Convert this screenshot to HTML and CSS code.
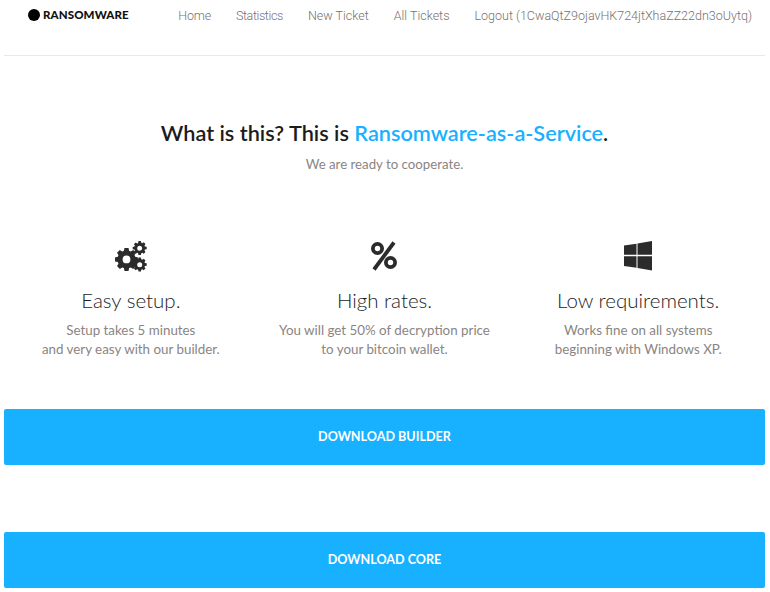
FILE: index.html
```html
<!DOCTYPE html>
<html lang="en">
<head>
<meta charset="utf-8">
<title>Ransomware</title>
<link rel="stylesheet" href="styles.css">
</head>
<body>
<div class="page">
  <header class="header">
    <div class="logo"><span class="logo-dot"></span><span class="logo-text">RANSOMWARE</span></div>
    <nav class="nav">
      <a class="nav-link nav-home">Home</a>
      <a class="nav-link nav-stats">Statistics</a>
      <a class="nav-link">New Ticket</a>
      <a class="nav-link">All Tickets</a>
      <a class="nav-link">Logout (1CwaQtZ9ojavHK724jtXhaZZ22dn3oUytq)</a>
    </nav>
  </header>
  <section class="hero">
    <h1 class="hero-title">What is this? This is <span class="accent">Ransomware-as-a-Service</span>.</h1>
    <p class="hero-sub">We are ready to cooperate.</p>
  </section>
  <section class="features">
    <div class="feature">
      <svg class="icon" width="34" height="32" viewBox="0 0 34 32">
        <g fill="#2b2b2b">
          <path fill-rule="evenodd" d="M10.5 7h4l.6 2.7 1.700.7 2.400-1.500 2.800 2.800-1.500 2.400.7 1.700 2.800.6v4l-2.800.6-.7 1.700 1.500 2.400-2.800 2.800-2.400-1.500-1.700.7-.6 2.800h-4l-.6-2.800-1.700-.7-2.400 1.500-2.800-2.800 1.500-2.400-.7-1.700L1 20.400v-4l2.800-.6.7-1.700L3 11.700l2.800-2.800 2.400 1.500 1.700-.7zM12.500 14.500a3.900 3.900 0 1 0 0 7.800a3.900 3.900 0 0 0 0-7.800z"/>
          <path fill-rule="evenodd" d="M24.500 0h2.400l.4 1.800 1 .4 1.400-1 1.800 1.800-1 1.400.4 1 1.800.4v2.400l-1.800.4-.4 1 1 1.400-1.800 1.800-1.400-1-1 .4-.4 1.800h-2.400l-.4-1.800-1-.4-1.400 1-1.800-1.800 1-1.400-.4-1-1.800-.4V6l1.800-.4.4-1-1-1.400 1.800-1.800 1.400 1 1-.4zM25.700 4.700a2.500 2.500 0 1 0 0 5a2.500 2.500 0 0 0 0-5z"/>
          <path fill-rule="evenodd" d="M24.500 16.500h2.400l.4 1.800 1 .4 1.400-1 1.800 1.800-1 1.400.4 1 1.800.4v2.400l-1.800.4-.4 1 1 1.400-1.800 1.800-1.400-1-1 .4-.4 1.800h-2.400l-.4-1.800-1-.4-1.400 1-1.800-1.800 1-1.400-.4-1-1.800-.4v-2.400l1.800-.4.4-1-1-1.400 1.800-1.800 1.400 1 1-.4zM25.700 21.200a2.500 2.500 0 1 0 0 5a2.500 2.500 0 0 0 0-5z"/>
        </g>
      </svg>
      <h2 class="feature-title">Easy setup.</h2>
      <p class="feature-text">Setup takes 5 minutes<br>and very easy with our builder.</p>
    </div>
    <div class="feature">
      <svg class="icon" width="34" height="32" viewBox="0 0 34 32">
        <g fill="none" stroke="#2b2b2b" stroke-width="3.800">
          <circle cx="10.500" cy="7.500" r="4.600"/>
          <circle cx="23.500" cy="21.500" r="4.600"/>
          <path d="M27 1.500 7 28.500"/>
        </g>
      </svg>
      <h2 class="feature-title">High rates.</h2>
      <p class="feature-text">You will get 50% of decryption price<br>to your bitcoin wallet.</p>
    </div>
    <div class="feature">
      <svg class="icon" width="34" height="32" viewBox="0 0 34 32">
        <g fill="#2b2b2b">
          <path d="M3 4.500 15.500 2.800V13.800H3z"/>
          <path d="M16.500 2.600 31 0V13.800H16.500z"/>
          <path d="M3 15.200H15.500V26.800L3 25z"/>
          <path d="M16.500 15.200H31V29.500L16.500 27z"/>
        </g>
      </svg>
      <h2 class="feature-title">Low requirements.</h2>
      <p class="feature-text">Works fine on all systems<br>beginning with Windows XP.</p>
    </div>
  </section>
  <a class="btn">DOWNLOAD BUILDER</a>
  <a class="btn btn-core">DOWNLOAD CORE</a>
</div>
</body>
</html>
```
FILE: styles.css
```css
* { box-sizing: border-box; }
html, body { margin: 0; padding: 0; background: #fff; overflow: hidden; }
body { font-family: "Lato", "Open Sans", sans-serif; color: #8a8582; }
.page { padding: 0 5px 0 4px; height: 592px; }
.header {
  display: flex;
  justify-content: space-between;
  height: 56px;
  padding: 6px 13px 0 24px;
  border-bottom: 1px solid #e9e9e9;
}
.logo { display: flex; align-items: center; height: 17px; gap: 3px; }
.logo-dot { width: 12px; height: 12px; border-radius: 50%; background: #000; }
.logo-text { font-size: 11.5px; font-weight: 900; color: #111; letter-spacing: 0.1px; }
.nav { display: flex; gap: 25px; font-family: "Roboto", "Lato", sans-serif; font-weight: 300; font-size: 12.5px; line-height: 20px; }
.nav-link { color: #77726f; }
.nav-home { letter-spacing: -0.2px; }
.nav-stats { letter-spacing: -0.4px; }
.hero { text-align: center; padding-top: 62px; }
.hero-title { margin: 0; font-size: 21.7px; line-height: 30px; font-weight: 600; color: #1c1c1c; }
.accent { color: #18b1ff; }
.hero-sub { margin: 6px 0 0; font-size: 13.25px; line-height: 20px; }
.features { display: grid; grid-template-columns: repeat(3, 1fr); margin-top: 67px; height: 168px; }
.feature { text-align: center; }
.icon { display: block; margin: 0 auto; }
.feature-title { margin: 14px 0 0; font-size: 20.5px; line-height: 26px; font-weight: 300; color: #1c1c1c; }
.feature-text { margin: 8px 0 0; font-size: 13.35px; line-height: 19px; }
.btn {
  display: flex;
  align-items: center;
  justify-content: center;
  height: 56px;
  padding-bottom: 2px;
  background: #18b1ff;
  border-radius: 2px;
  color: #fff;
  font-size: 12.6px;
  font-weight: 700;
}
.btn-core { margin-top: 67px; }
```
